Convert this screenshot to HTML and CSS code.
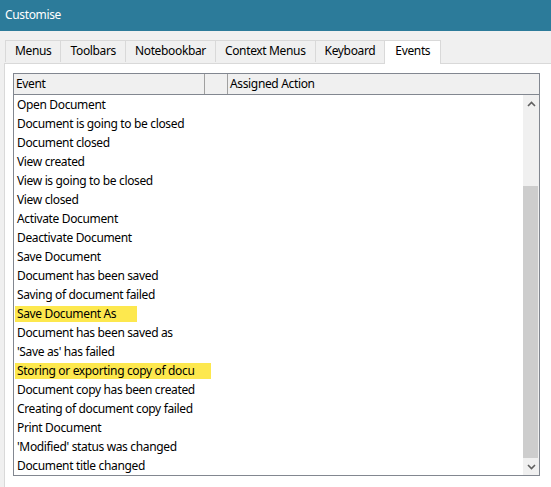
FILE: index.html
```html
<!DOCTYPE html>
<html lang="en">
<head>
    <meta charset="UTF-8">
    <title>Customise</title>
    <link rel="stylesheet" href="styles.css">
</head>
<body>
    <div class="titlebar">Customise</div>

    <div class="dialog">
        <div class="tabs">
            <div class="tab">Menus</div>
            <div class="tab">Toolbars</div>
            <div class="tab">Notebookbar</div>
            <div class="tab">Context Menus</div>
            <div class="tab">Keyboard</div>
            <div class="tab active">Events</div>
        </div>

        <div class="tab-panel">
            <div class="listbox">
                <div class="list-header">
                    <div class="col col-event">Event</div>
                    <div class="col col-blank"></div>
                    <div class="col col-action">Assigned Action</div>
                </div>
                <div class="list-body">
                    <div class="rows">
                        <div class="row"><span>Open Document</span></div>
                        <div class="row"><span>Document is going to be closed</span></div>
                        <div class="row"><span>Document closed</span></div>
                        <div class="row"><span>View created</span></div>
                        <div class="row"><span>View is going to be closed</span></div>
                        <div class="row"><span>View closed</span></div>
                        <div class="row"><span>Activate Document</span></div>
                        <div class="row"><span>Deactivate Document</span></div>
                        <div class="row"><span>Save Document</span></div>
                        <div class="row"><span>Document has been saved</span></div>
                        <div class="row"><span>Saving of document failed</span></div>
                        <div class="row"><span class="mark mark-short">Save Document As</span></div>
                        <div class="row"><span>Document has been saved as</span></div>
                        <div class="row"><span>'Save as' has failed</span></div>
                        <div class="row"><span class="mark mark-long">Storing or exporting copy of docu</span></div>
                        <div class="row"><span>Document copy has been created</span></div>
                        <div class="row"><span>Creating of document copy failed</span></div>
                        <div class="row"><span>Print Document</span></div>
                        <div class="row"><span>'Modified' status was changed</span></div>
                        <div class="row"><span>Document title changed</span></div>
                    </div>
                    <div class="scrollbar">
                        <div class="arrow">
                            <svg width="9" height="6" viewBox="0 0 9 6"><path d="M1 5 L4.5 1.5 L8 5" fill="none" stroke="#606060" stroke-width="1.6"/></svg>
                        </div>
                        <div class="track">
                            <div class="thumb"></div>
                        </div>
                        <div class="arrow">
                            <svg width="9" height="6" viewBox="0 0 9 6"><path d="M1 1 L4.5 4.5 L8 1" fill="none" stroke="#606060" stroke-width="1.6"/></svg>
                        </div>
                    </div>
                </div>
            </div>
        </div>
    </div>
</body>
</html>
```

FILE: styles.css
```css
* {
    margin: 0;
    padding: 0;
    box-sizing: border-box;
}

body {
    font-family: 'Noto Sans', 'Open Sans', sans-serif;
    font-size: 12px;
    letter-spacing: -0.35px;
    color: #000;
    background: #f0f0f0;
    width: 551px;
    height: 487px;
    overflow: hidden;
}

.titlebar {
    height: 31px;
    line-height: 30px;
    padding-left: 5px;
    background: #2c7b9a;
    color: white;
    font-size: 12px;
}

.dialog {
    padding: 8px 0 0 4px;
}

/* Tabs */
.tabs {
    display: flex;
    align-items: flex-end;
    height: 24px;
    padding-left: 1px;
}

.tab {
    height: 22px;
    line-height: 20px;
    padding: 0 9px;
    border: 1px solid #d9d9d9;
    border-bottom: none;
    margin-left: -1px;
    background: #f0f0f0;
    margin-bottom: 1px;
}

.tab:first-child {
    margin-left: 0;
}

.tab.active {
    height: 24px;
    line-height: 19px;
    background: white;
    border-color: #d9d9d9;
    margin-bottom: -1px;
    position: relative;
    z-index: 1;
    padding: 0 10px;
}

.tab-panel {
    background: white;
    border: 1px solid #d9d9d9;
    border-right: none;
    height: 430px;
    padding: 9px 0 0 8px;
}

/* List */
.listbox {
    width: 527px;
    height: 403px;
    border: 1px solid #828790;
    display: flex;
    flex-direction: column;
}

.list-header {
    display: flex;
    height: 21px;
    background: #f0f0f0;
    border-bottom: 1px solid #828790;
}

.col {
    line-height: 19px;
    padding-left: 2px;
    border-right: 1px solid #a0a0a0;
}

.col-event {
    width: 191px;
}

.col-blank {
    width: 23px;
}

.col-action {
    flex: 1;
    border-right: none;
}

.list-body {
    flex: 1;
    display: flex;
    overflow: hidden;
}

.rows {
    flex: 1;
    padding-left: 1px;
}

.row {
    height: 19px;
    line-height: 19px;
    white-space: nowrap;
}

.row span {
    display: inline-block;
    padding: 0 2px 0 2px;
}

.mark {
    background: #fde84e;
    line-height: 15px;
    height: 16px;
    margin-top: 2px;
}

.mark-short {
    width: 122px;
}

.mark-long {
    width: 196px;
}

/* Scrollbar */
.scrollbar {
    width: 16px;
    background: #f0f0f0;
    display: flex;
    flex-direction: column;
}

.arrow {
    height: 17px;
    display: flex;
    align-items: center;
    justify-content: center;
}

.track {
    flex: 1;
    position: relative;
}

.thumb {
    position: absolute;
    left: 0;
    right: 1px;
    top: 74px;
    bottom: 0;
    background: #cdcdcd;
}
```
